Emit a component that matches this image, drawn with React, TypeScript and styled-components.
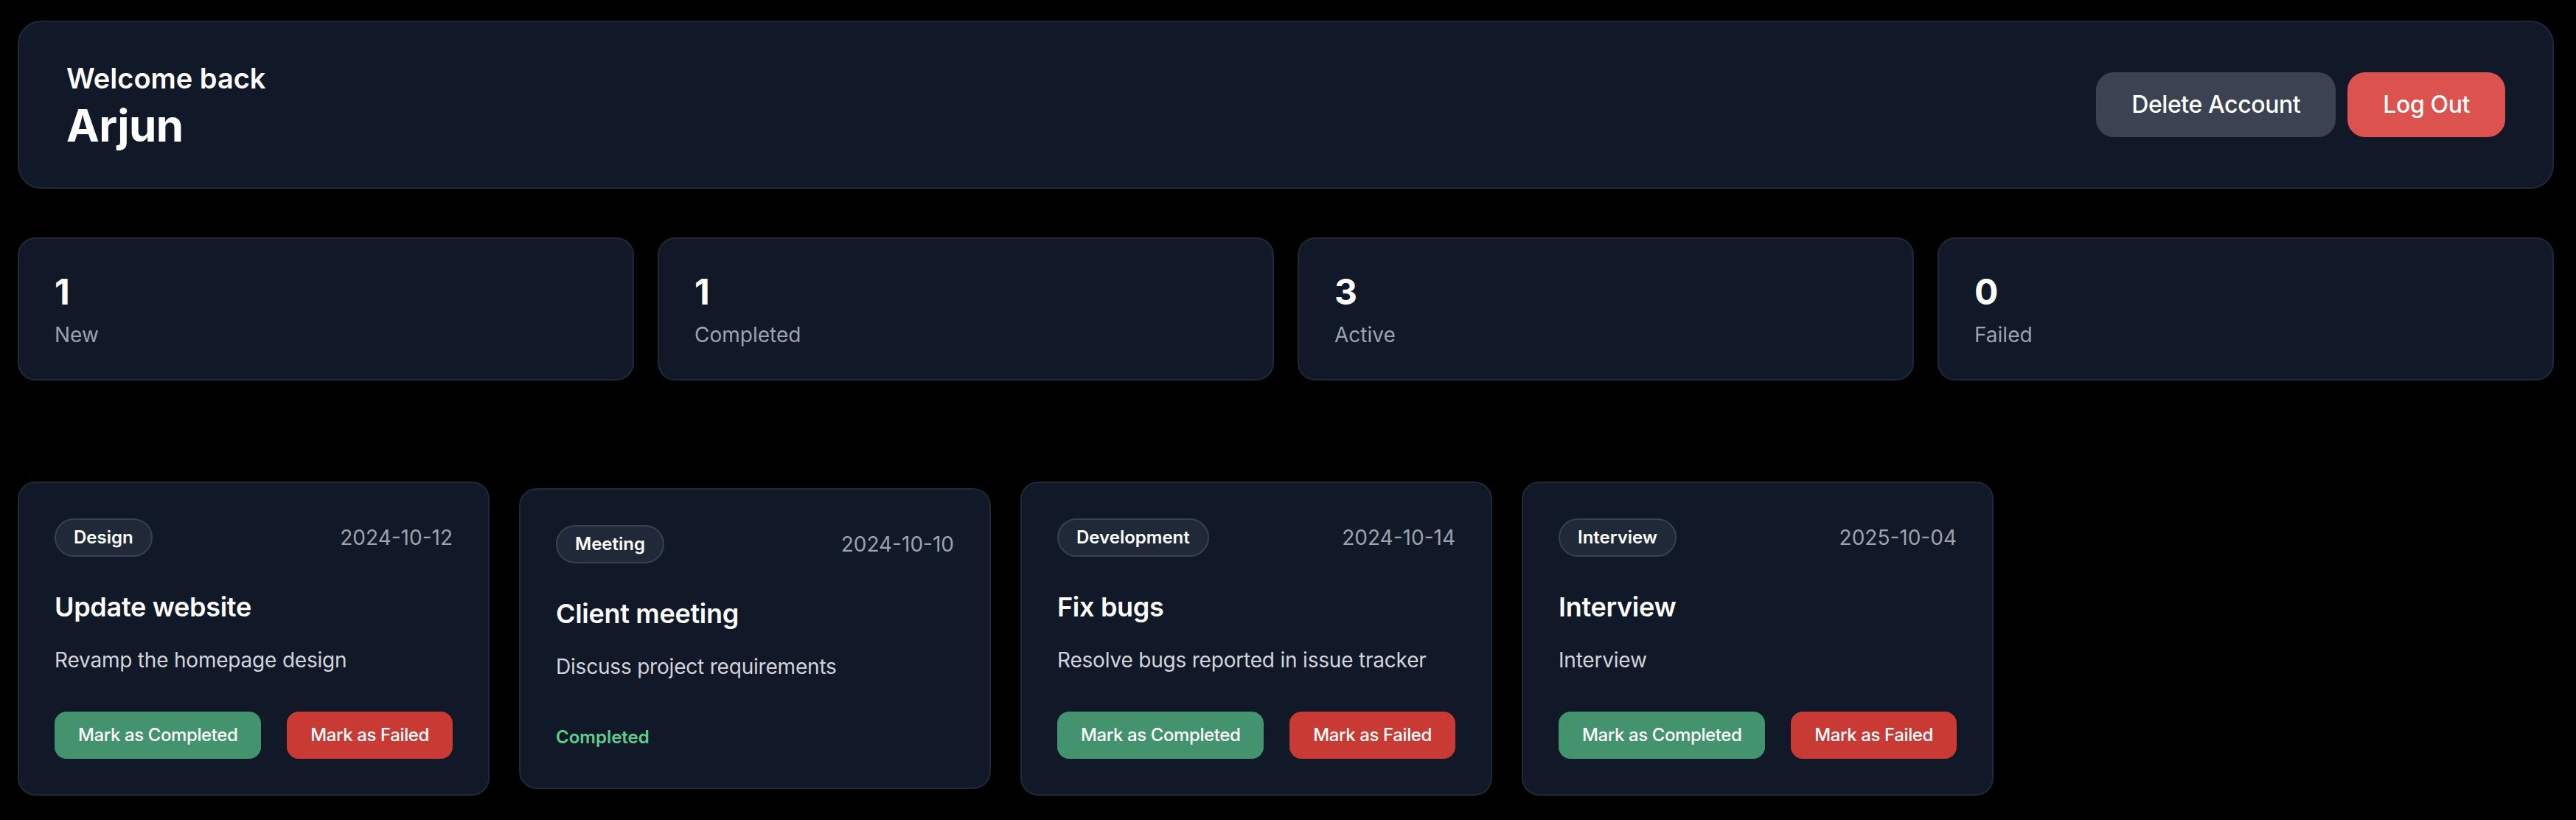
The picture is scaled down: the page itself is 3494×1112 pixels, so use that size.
import React from "react"
import styled, { createGlobalStyle } from "styled-components"

type Task = {
    category: string
    date: string
    title: string
    description: string
    status: "active" | "completed"
}

const stats = [
    { count: 1, label: "New" },
    { count: 1, label: "Completed" },
    { count: 3, label: "Active" },
    { count: 0, label: "Failed" },
]

const tasks: Task[] = [
    { category: "Design", date: "2024-10-12", title: "Update website", description: "Revamp the homepage design", status: "active" },
    { category: "Meeting", date: "2024-10-10", title: "Client meeting", description: "Discuss project requirements", status: "completed" },
    { category: "Development", date: "2024-10-14", title: "Fix bugs", description: "Resolve bugs reported in issue tracker", status: "active" },
    { category: "Interview", date: "2025-10-04", title: "Interview", description: "Interview", status: "active" },
]

export default function App() {
    return (
        <>
            <GlobalStyle />
            <Page>
                <Header>
                    <div>
                        <Welcome>Welcome back</Welcome>
                        <Name>Arjun</Name>
                    </div>
                    <HeaderActions>
                        <HeaderButton variant="neutral">Delete Account</HeaderButton>
                        <HeaderButton variant="danger">Log Out</HeaderButton>
                    </HeaderActions>
                </Header>

                <StatsGrid>
                    {stats.map((s) => (
                        <StatCard key={s.label}>
                            <StatCount>{s.count}</StatCount>
                            <StatLabel>{s.label}</StatLabel>
                        </StatCard>
                    ))}
                </StatsGrid>

                <TaskList>
                    {tasks.map((t) => (
                        <TaskCard key={t.title}>
                            <TaskTop>
                                <Badge>{t.category}</Badge>
                                <TaskDate>{t.date}</TaskDate>
                            </TaskTop>
                            <TaskTitle>{t.title}</TaskTitle>
                            <TaskDesc>{t.description}</TaskDesc>
                            {t.status === "completed" ? (
                                <StatusText>Completed</StatusText>
                            ) : (
                                <TaskActions>
                                    <ActionButton tone="success">Mark as Completed</ActionButton>
                                    <ActionButton tone="fail">Mark as Failed</ActionButton>
                                </TaskActions>
                            )}
                        </TaskCard>
                    ))}
                </TaskList>
            </Page>
        </>
    )
}

const GlobalStyle = createGlobalStyle`
    html, body {
        margin: 0;
        background: #000000;
        font-family: Inter, "Noto Sans", "Liberation Sans", sans-serif;
        color: #ffffff;
    }
    * {
        box-sizing: border-box;
    }
`

const Page = styled.main`
    padding: 28px 30px 28px 24px;
    min-height: 1112px;
    background: #000000;
`

const Header = styled.header`
    display: flex;
    justify-content: space-between;
    align-items: center;
    background: #111827;
    border: 2px solid #1f2937;
    border-radius: 32px;
    padding: 48px 64px;
`

const Welcome = styled.p`
    margin: 0;
    font-size: 38px;
    line-height: 56px;
    font-weight: 600;
`

const Name = styled.h1`
    margin: 0;
    font-size: 60px;
    line-height: 72px;
    font-weight: 700;
    letter-spacing: -0.5px;
`

const HeaderActions = styled.div`
    display: flex;
    gap: 16px;
`

const HeaderButton = styled.button<{ variant: "neutral" | "danger" }>`
    border: none;
    border-radius: 24px;
    padding: 20px 48px;
    font-family: inherit;
    font-size: 32px;
    line-height: 48px;
    font-weight: 500;
    letter-spacing: -0.4px;
    white-space: nowrap;
    color: #ffffff;
    background: ${(p) => (p.variant === "danger" ? "#dc524f" : "#3b4252")};
    cursor: pointer;
`

const StatsGrid = styled.section`
    display: grid;
    grid-template-columns: repeat(4, 1fr);
    gap: 32px;
    margin-top: 66px;
`

const StatCard = styled.div`
    background: #111827;
    border: 2px solid #1f2937;
    border-radius: 24px;
    padding: 40px 48px;
`

const StatCount = styled.div`
    font-size: 48px;
    line-height: 64px;
    font-weight: 700;
`

const StatLabel = styled.div`
    margin-top: 6px;
    font-size: 28px;
    line-height: 40px;
    color: #9ca3af;
`

const TaskList = styled.section`
    display: flex;
    align-items: center;
    gap: 40px;
    margin-top: 137px;
`

const TaskCard = styled.article`
    flex: 0 0 640px;
    background: #111827;
    border: 2px solid #1f2937;
    border-radius: 24px;
    padding: 48px;
`

const TaskTop = styled.div`
    display: flex;
    justify-content: space-between;
    align-items: center;
`

const Badge = styled.span`
    background: #1f2937;
    border: 2px solid #374151;
    border-radius: 9999px;
    padding: 8px 24px;
    font-size: 24px;
    line-height: 32px;
    font-weight: 600;
`

const TaskDate = styled.span`
    font-size: 28px;
    line-height: 40px;
    color: #9ca3af;
`

const TaskTitle = styled.h2`
    margin: 40px 0 0;
    font-size: 36px;
    line-height: 56px;
    font-weight: 600;
    letter-spacing: -0.3px;
`

const TaskDesc = styled.p`
    margin: 24px 0 0;
    font-size: 28px;
    line-height: 40px;
    color: #d1d5db;
    letter-spacing: -0.2px;
`

const TaskActions = styled.div`
    display: flex;
    justify-content: space-between;
    gap: 20px;
    margin-top: 50px;
`

const ActionButton = styled.button<{ tone: "success" | "fail" }>`
    flex: 0 0 auto;
    border: none;
    border-radius: 16px;
    padding: 16px 32px;
    font-family: inherit;
    font-size: 24px;
    line-height: 32px;
    font-weight: 500;
    letter-spacing: -0.4px;
    white-space: nowrap;
    color: #ffffff;
    background: ${(p) => (p.tone === "success" ? "#43936e" : "#c93a35")};
    cursor: pointer;
`

const StatusText = styled.p`
    margin: 56px 0 0;
    font-size: 24px;
    line-height: 40px;
    font-weight: 600;
    color: #5ccf8f;
`
